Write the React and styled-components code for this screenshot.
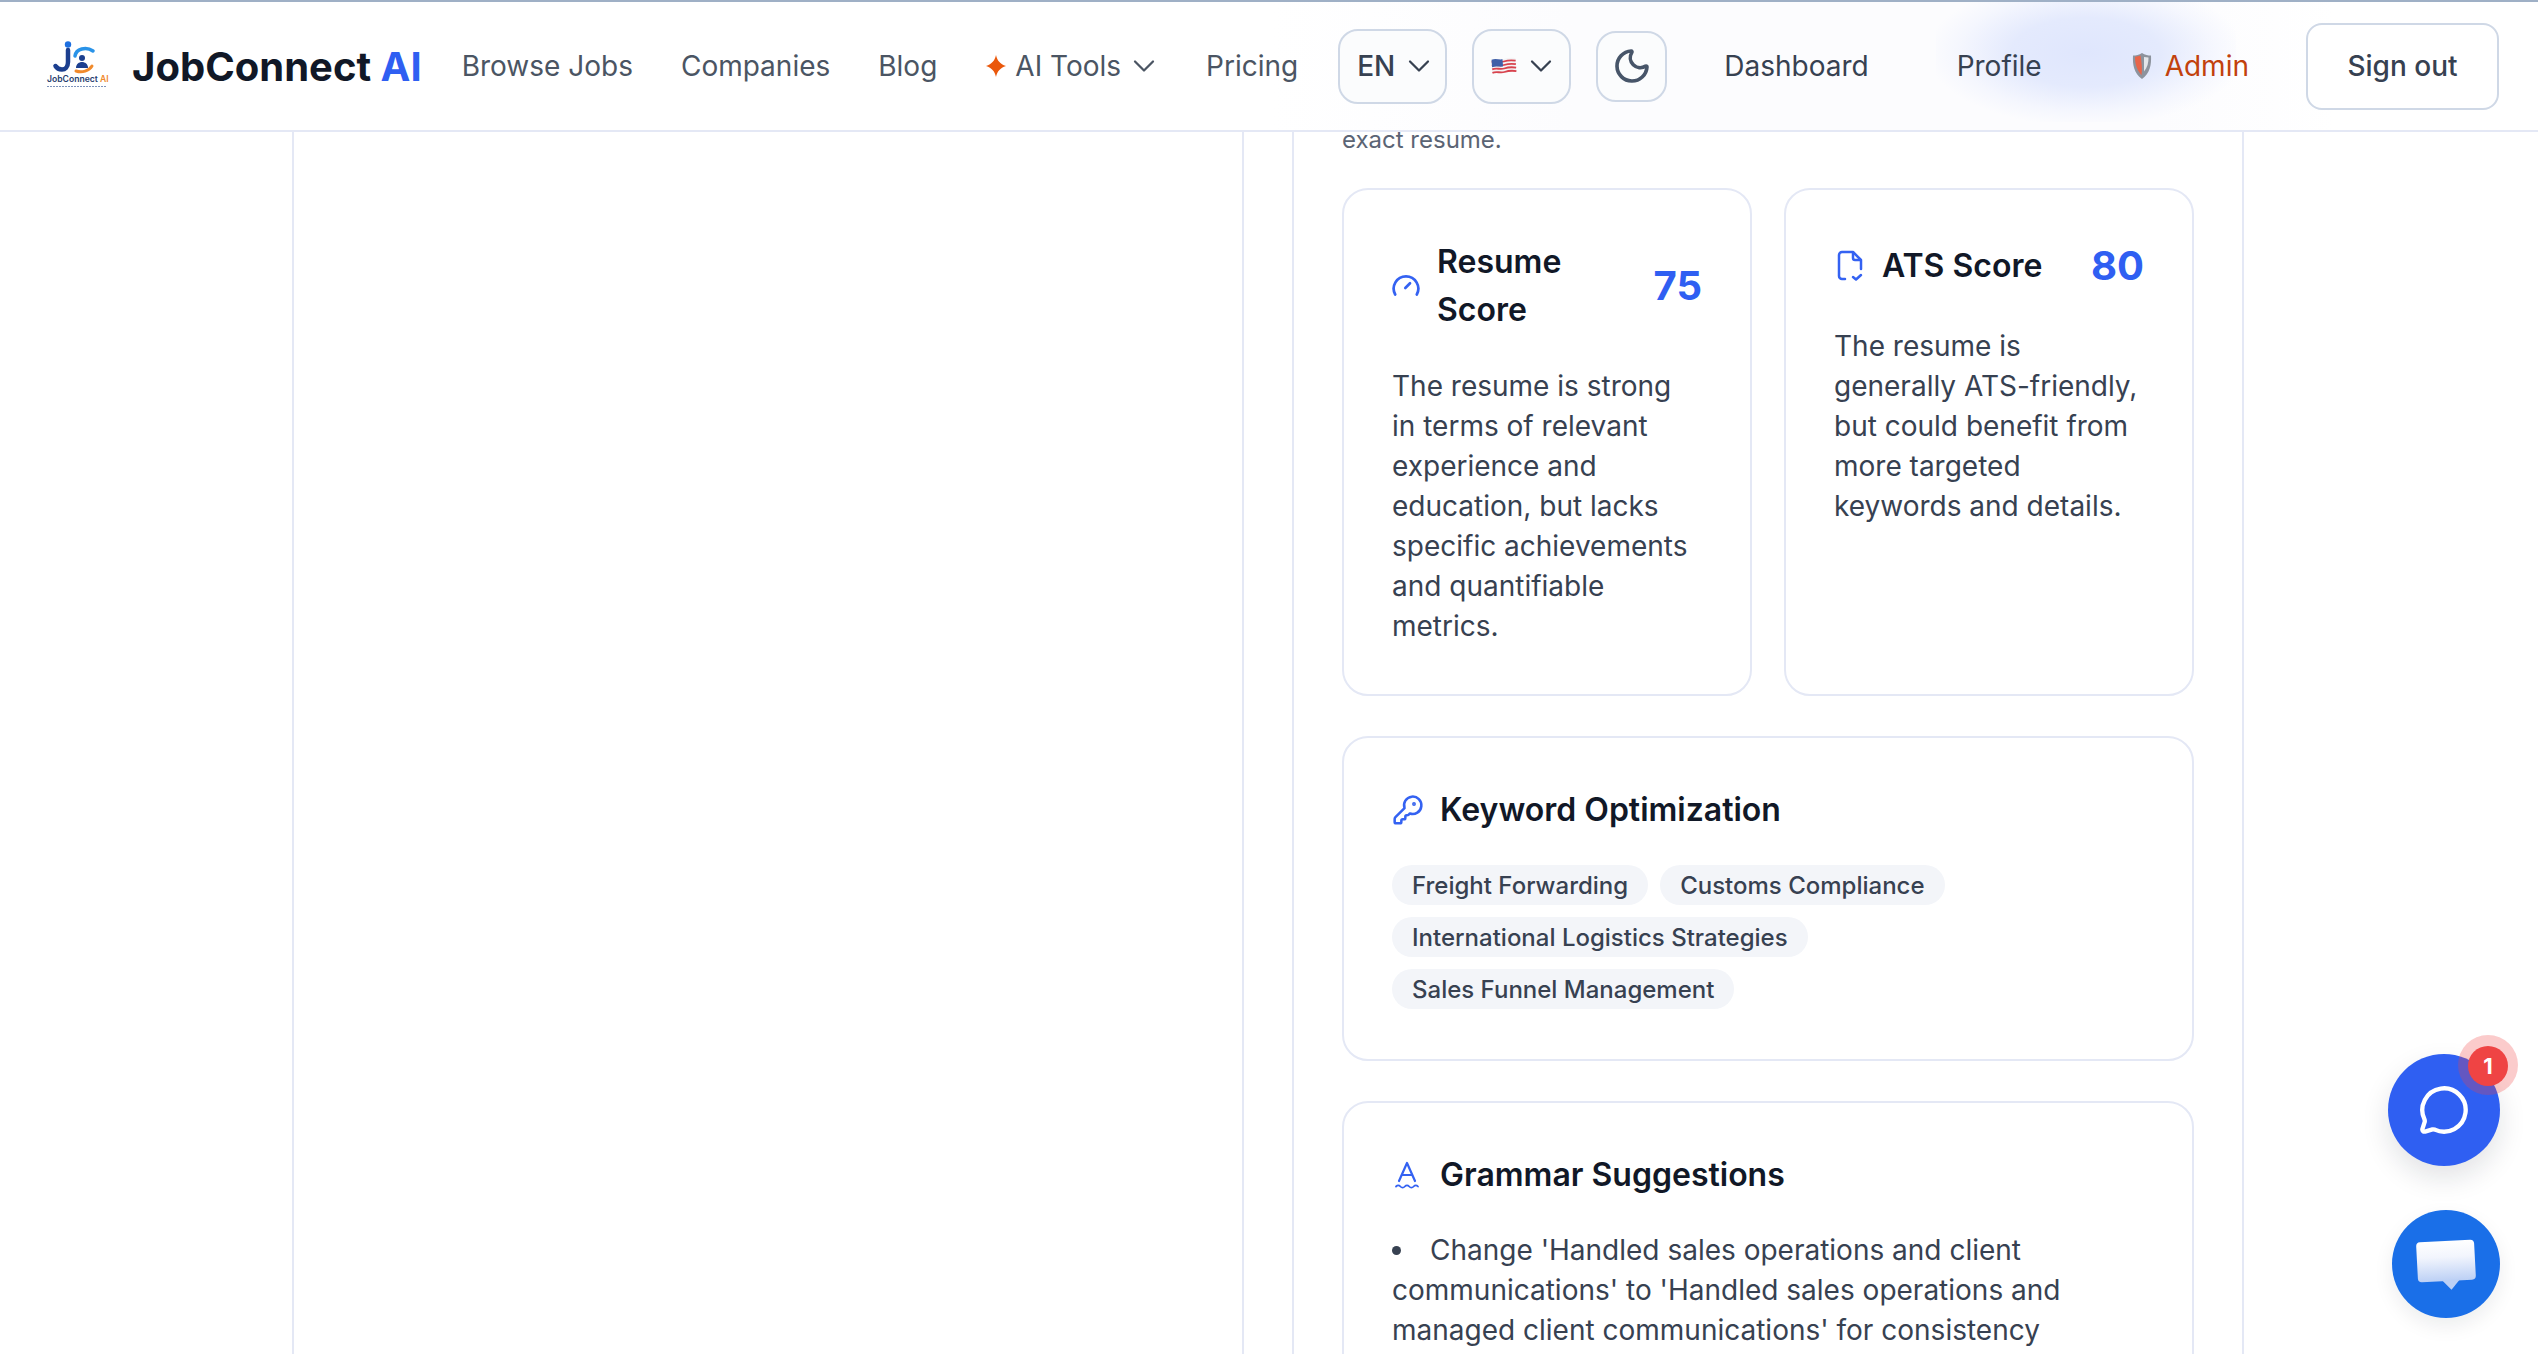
import React from "react";
import styled, { createGlobalStyle } from "styled-components";
import { ChevronDown, Moon, MessageCircle, KeyRound } from "lucide-react";

const GlobalStyle = createGlobalStyle`
    html, body {
        margin: 0;
        padding: 0;
        background: #ffffff;
        font-family: "Inter", "Noto Sans", sans-serif;
        color: #374151;
        overflow: hidden;
    }
    * {
        box-sizing: border-box;
    }
`;

const keywords = [
    "Freight Forwarding",
    "Customs Compliance",
    "International Logistics Strategies",
    "Sales Funnel Management",
];

function Logo() {
    return (
        <svg width="64" height="50" viewBox="0 0 64 50">
            <circle cx="23" cy="3.500" r="3.200" fill="#1d6fe0" />
            <path d="M23 9v12c0 5-3 7.500-6 7.500s-5-1-6.500-3.500" fill="none" stroke="#1c3f8f" strokeWidth="4.500" strokeLinecap="round" />
            <path d="M30 15c1-7 11-10 18-5" fill="none" stroke="#2a93e8" strokeWidth="3.500" strokeLinecap="round" />
            <path d="M31 30c6 2 13 0 16-5" fill="none" stroke="#f08a2c" strokeWidth="3" strokeLinecap="round" />
            <circle cx="37" cy="17" r="3" fill="#1c3f8f" />
            <path d="M31 27c0-4 3-6 6-6s6 2 6 6z" fill="#1c3f8f" />
            <text x="2" y="41" fontSize="8.600" fontWeight="600" fill="#27406f" fontFamily="Inter, sans-serif">
                JobConnect <tspan fill="#f08a2c">AI</tspan>
            </text>
            <path d="M2 45.500h60" stroke="#7d93bb" strokeWidth="1" strokeDasharray="2 1" />
        </svg>
    );
}

function Sparkle() {
    return (
        <svg width="20" height="22" viewBox="0 0 20 22">
            <path d="M10 0c1.200 5.600 4 9 10 11-6 2-8.800 5.400-10 11-1.200-5.600-4-9-10-11 6-2 8.800-5.400 10-11z" fill="#ea580c" />
        </svg>
    );
}

function Flag() {
    return (
        <svg width="26" height="20" viewBox="0 0 26 20">
            <g transform="rotate(-4 13 10)">
                <path d="M1 3c4-1.500 8 1 12 0s8-1 12 0v14c-4-1-8-1-12 0s-8-1.500-12 0z" fill="#f4f4f6" />
                <path d="M1 5.500c4-1.500 8 1 12 0s8-1 12 0M1 9c4-1.500 8 1 12 0s8-1 12 0M1 12.500c4-1.500 8 1 12 0s8-1 12 0M1 16c4-1.500 8 1 12 0s8-1 12 0" fill="none" stroke="#d8434e" strokeWidth="1.800" />
                <path d="M1 3c4-1.500 7 .5 11 .2v7.300c-4 .3-7-1.500-11 0z" fill="#3f5fa8" />
            </g>
        </svg>
    );
}

function Shield() {
    return (
        <svg width="22" height="28" viewBox="2 0 20 28">
            <path d="M12 1c3 2 6 2.500 9 2.500 0.500 9-1 18-9 23.500C4 21.500 2.500 12.500 3 3.500c3 0 6-.5 9-2.500z" fill="#8d939d" />
            <path d="M10.500 3.500c-1.500 .6-3.500 1-5.500 1.200 0 6 1 12 6.500 18.500 1-6 0-14-1-19.700z" fill="#e8654a" />
            <path d="M14 5l4.500 .6c0 5-1 10-4.500 14z" fill="#e3e5e9" />
        </svg>
    );
}

function GaugeIcon() {
    return (
        <svg width="29" height="24" viewBox="0 0 29 24" fill="none" stroke="#3462f2" strokeWidth="2.700" strokeLinecap="round" strokeLinejoin="round">
            <path d="M3.200 20.500A12.300 12.300 0 1 1 24.800 20.500" />
            <path d="M13.300 14l4.700-4.700" />
        </svg>
    );
}

function FileCheckIcon() {
    return (
        <svg width="32" height="32" viewBox="0 0 32 32" fill="none" stroke="#3462f2" strokeWidth="2.500" strokeLinecap="round" strokeLinejoin="round">
            <path d="M11 29H8a3 3 0 0 1-3-3V5a3 3 0 0 1 3-3h11l8 8v9" />
            <path d="M19 2.500V8a2 2 0 0 0 2 2h5.500" />
            <path d="M19 27l3 2.500 5-4.500" />
        </svg>
    );
}

function SpellIcon() {
    return (
        <svg width="32" height="32" viewBox="0 0 32 32" fill="none" stroke="#3462f2" strokeLinecap="round" strokeLinejoin="round">
            <path d="M7 22L15 4l8 18" strokeWidth="2.200" />
            <path d="M10 16h10" strokeWidth="2.200" />
            <path d="M4 27.500c1.500-1.500 3-1.500 4.400 0s3 1.500 4.400 0 3-1.500 4.400 0 3 1.500 4.400 0 3-1.500 4.400 0" strokeWidth="1.800" />
        </svg>
    );
}

function App() {
    return (
        <>
            <GlobalStyle />
            <Header>
                <HeaderGlow />
                <Brand>
                    <Logo />
                    <BrandName>JobConnect <span>AI</span></BrandName>
                </Brand>
                <NavLinks>
                    <NavLink>Browse Jobs</NavLink>
                    <NavLink>Companies</NavLink>
                    <NavLink>Blog</NavLink>
                    <ToolsLink>
                        <Sparkle />
                        <span>AI Tools</span>
                        <ChevronDown size={36} strokeWidth={1.500} />
                    </ToolsLink>
                    <NavLink>Pricing</NavLink>
                </NavLinks>
                <Controls>
                    <SelectButton $width={109}>
                        EN
                        <ChevronDown size={36} strokeWidth={1.500} />
                    </SelectButton>
                    <SelectButton $width={99}>
                        <Flag />
                        <ChevronDown size={36} strokeWidth={1.500} />
                    </SelectButton>
                    <ThemeButton>
                        <Moon size={40} strokeWidth={2.200} />
                    </ThemeButton>
                </Controls>
                <Account>
                    <AccountLink $gap={88}>Dashboard</AccountLink>
                    <AccountLink $gap={89}>Profile</AccountLink>
                    <AdminLink>
                        <Shield />
                        Admin
                    </AdminLink>
                    <SignOut>Sign out</SignOut>
                </Account>
            </Header>
            <Main>
                <Columns>
                    <LeftPanel />
                    <RightPanel>
                        <Intro>exact resume.</Intro>
                        <ScoreGrid>
                            <Card>
                                <ScoreHeader>
                                    <ScoreTitle>
                                        <GaugeIcon />
                                        <CardTitle>Resume Score</CardTitle>
                                    </ScoreTitle>
                                    <ScoreValue>75</ScoreValue>
                                </ScoreHeader>
                                <CardText>
                                    The resume is strong in terms of relevant experience and education, but lacks specific achievements and quantifiable metrics.
                                </CardText>
                            </Card>
                            <Card>
                                <ScoreHeader>
                                    <ScoreTitle>
                                        <FileCheckIcon />
                                        <CardTitle>ATS Score</CardTitle>
                                    </ScoreTitle>
                                    <ScoreValue>80</ScoreValue>
                                </ScoreHeader>
                                <CardText>
                                    The resume is generally ATS-friendly, but could benefit from more targeted keywords and details.
                                </CardText>
                            </Card>
                        </ScoreGrid>
                        <Card>
                            <SectionHeader>
                                <KeyRound size={32} strokeWidth={1.900} color="#3462f2" />
                                <CardTitle>Keyword Optimization</CardTitle>
                            </SectionHeader>
                            <TagList>
                                {keywords.map((word) => (
                                    <Tag key={word}>{word}</Tag>
                                ))}
                            </TagList>
                        </Card>
                        <Card>
                            <SectionHeader>
                                <SpellIcon />
                                <CardTitle>Grammar Suggestions</CardTitle>
                            </SectionHeader>
                            <SuggestionList>
                                <li>Change 'Handled sales operations and client communications' to 'Handled sales operations and managed client communications' for consistency</li>
                            </SuggestionList>
                        </Card>
                    </RightPanel>
                </Columns>
            </Main>
            <FloatingButtons>
                <ChatButton>
                    <MessageCircle size={52} strokeWidth={2} color="#ffffff" />
                    <BadgeHalo />
                    <Badge>1</Badge>
                </ChatButton>
                <SupportButton>
                    <SupportBubble />
                </SupportButton>
            </FloatingButtons>
        </>
    );
}

const Header = styled.header`
    position: relative;
    z-index: 10;
    height: 132px;
    padding: 0 39px 0 45px;
    display: flex;
    align-items: center;
    background: linear-gradient(90deg, #ffffff 50%, #fcfcfe 62%, #fcfcfe 85%, #ffffff 92%);
    border-top: 2px solid #9fb0c6;
    border-bottom: 2px solid #e4e8f5;
    > * {
        flex-shrink: 0;
    }
`;

const HeaderGlow = styled.div`
    position: absolute;
    top: 0;
    left: 1936px;
    width: 300px;
    height: 120px;
    background: radial-gradient(ellipse at 50% 42%, #dfe6fd 0%, #e4eafd 35%, rgba(240, 243, 254, 0.6) 60%, rgba(255, 255, 255, 0) 75%);
`;

const Brand = styled.div`
    position: relative;
    display: flex;
    align-items: center;
    gap: 23px;
`;

const BrandName = styled.div`
    font-size: 40px;
    font-weight: 700;
    color: #111827;
    white-space: nowrap;
    span {
        color: #2f5ff2;
    }
`;

const NavLinks = styled.nav`
    position: relative;
    margin-left: 40px;
    display: flex;
    align-items: center;
    gap: 48px;
`;

const NavLink = styled.a`
    font-size: 28px;
    color: #4b5563;
    white-space: nowrap;
`;

const ToolsLink = styled(NavLink)`
    margin-right: -4px;
    display: flex;
    align-items: center;
    gap: 9px;
    svg:first-child {
        margin-left: 1px;
    }
    svg:last-child {
        margin-left: -4px;
    }
`;

const Controls = styled.div`
    position: relative;
    margin-left: 40px;
    display: flex;
    align-items: center;
    gap: 25px;
`;

const SelectButton = styled.div`
    width: ${(props) => props.$width}px;
    height: 75px;
    padding-left: 17px;
    display: flex;
    align-items: center;
    gap: 6px;
    font-size: 28px;
    font-weight: 500;
    color: #374151;
    background: #fbfcfd;
    border: 2px solid #cfd8e6;
    border-radius: 20px;
`;

const ThemeButton = styled.div`
    width: 71px;
    height: 71px;
    display: flex;
    align-items: center;
    justify-content: center;
    color: #475569;
    background: #fbfcfd;
    border: 2px solid #cfd8e6;
    border-radius: 20px;
`;

const Account = styled.div`
    position: relative;
    margin-left: 57px;
    display: flex;
    align-items: center;
`;

const AccountLink = styled.a`
    margin-right: ${(props) => props.$gap}px;
    font-size: 28px;
    color: #374151;
    white-space: nowrap;
`;

const AdminLink = styled.a`
    display: flex;
    align-items: center;
    gap: 12px;
    font-size: 28px;
    color: #c2410c;
`;

const SignOut = styled.button`
    margin-left: 57px;
    width: 193px;
    height: 87px;
    font-family: inherit;
    font-size: 28px;
    font-weight: 500;
    color: #374151;
    background: #ffffff;
    border: 2px solid #cfd8e6;
    border-radius: 16px;
`;

const Main = styled.main`
    height: 1222px;
    overflow: hidden;
`;

const Columns = styled.div`
    margin-left: 292px;
    display: grid;
    grid-template-columns: 952px 952px;
    column-gap: 48px;
`;

const LeftPanel = styled.section`
    border-left: 2px solid #e4e8f5;
    border-right: 2px solid #e4e8f5;
`;

const RightPanel = styled.section`
    padding: 0 48px 48px;
    display: flex;
    flex-direction: column;
    gap: 40px;
    border-left: 2px solid #e4e8f5;
    border-right: 2px solid #e4e8f5;
`;

const Intro = styled.p`
    margin: -10px 0 -10px;
    font-size: 24px;
    line-height: 36px;
    color: #5b6474;
`;

const ScoreGrid = styled.div`
    display: grid;
    grid-template-columns: 1fr 1fr;
    column-gap: 32px;
`;

const Card = styled.div`
    padding: 48px;
    background: #ffffff;
    border: 2px solid #e4e8f5;
    border-radius: 26px;
`;

const ScoreHeader = styled.div`
    margin-bottom: 32px;
    display: flex;
    align-items: center;
    justify-content: space-between;
    gap: 16px;
`;

const ScoreTitle = styled.div`
    display: flex;
    align-items: center;
    gap: 16px;
    svg {
        flex-shrink: 0;
    }
`;

const CardTitle = styled.h3`
    margin: 0;
    font-size: 32px;
    line-height: 48px;
    font-weight: 600;
    color: #111827;
`;

const ScoreValue = styled.div`
    font-size: 40px;
    line-height: 56px;
    font-weight: 700;
    color: #2f5ff2;
`;

const CardText = styled.p`
    margin: 0;
    font-size: 28px;
    line-height: 40px;
    color: #374151;
`;

const SectionHeader = styled.div`
    margin-bottom: 31px;
    display: flex;
    align-items: center;
    gap: 16px;
`;

const TagList = styled.div`
    margin-bottom: 2px;
    display: flex;
    flex-wrap: wrap;
    gap: 12px;
`;

const Tag = styled.span`
    height: 40px;
    padding: 0 20px;
    display: flex;
    align-items: center;
    font-size: 24px;
    font-weight: 500;
    color: #374151;
    background: #f3f5f9;
    border-radius: 20px;
`;

const SuggestionList = styled.ul`
    margin: 0;
    padding: 0;
    list-style: disc inside;
    font-size: 28px;
    line-height: 40px;
    color: #374151;
`;

const FloatingButtons = styled.div`
    position: fixed;
    right: 38px;
    bottom: 36px;
    display: flex;
    flex-direction: column;
    align-items: flex-end;
    gap: 44px;
`;

const ChatButton = styled.div`
    position: relative;
    width: 112px;
    height: 112px;
    display: flex;
    align-items: center;
    justify-content: center;
    background: #2f5ff2;
    border-radius: 50%;
    box-shadow: 0 12px 28px rgba(15, 23, 42, 0.12);
`;

const BadgeHalo = styled.span`
    position: absolute;
    top: -19px;
    right: -18px;
    width: 60px;
    height: 60px;
    background: rgba(239, 68, 68, 0.28);
    border-radius: 50%;
`;

const Badge = styled.span`
    position: absolute;
    top: -8px;
    right: -8px;
    width: 40px;
    height: 40px;
    display: flex;
    align-items: center;
    justify-content: center;
    font-size: 22px;
    font-weight: 700;
    color: #ffffff;
    background: #ef4444;
    border-radius: 50%;
`;

const SupportButton = styled.div`
    width: 108px;
    height: 108px;
    display: flex;
    align-items: center;
    justify-content: center;
    background: #1a6fe8;
    border-radius: 50%;
    box-shadow: 0 8px 20px rgba(15, 23, 42, 0.08);
`;

const SupportBubble = styled.div`
    position: relative;
    width: 58px;
    height: 40px;
    margin-bottom: 6px;
    background: linear-gradient(180deg, #ffffff 0%, #f2f5fd 40%, #bcd0f5 100%);
    border-radius: 4px;
    transform: rotate(-3deg);
    &::after {
        content: "";
        position: absolute;
        left: 24px;
        bottom: -9px;
        width: 0;
        height: 0;
        border-left: 9px solid transparent;
        border-right: 9px solid transparent;
        border-top: 10px solid #bcd0f5;
    }
`;

export default App;
